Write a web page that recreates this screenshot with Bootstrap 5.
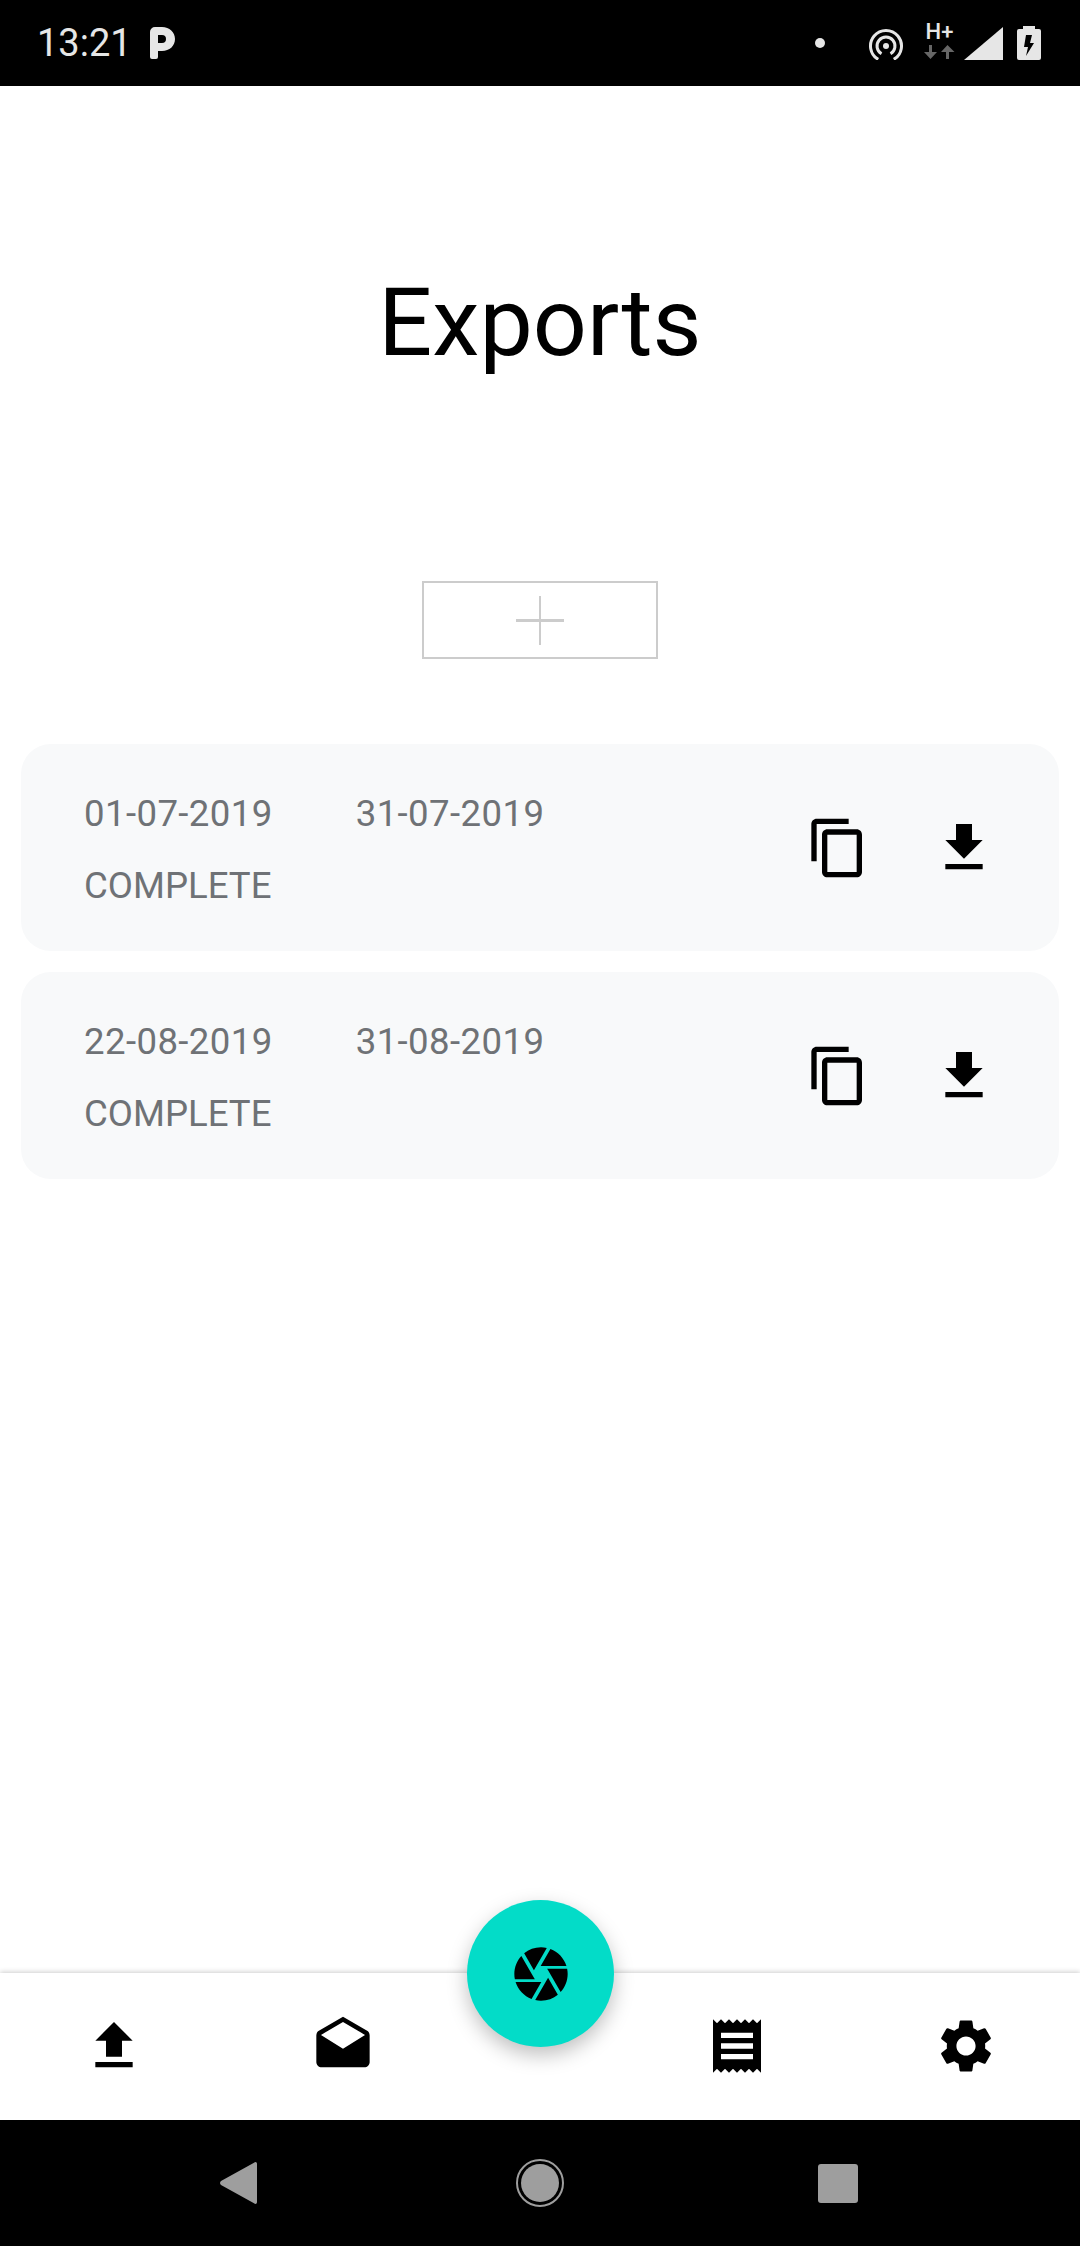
<!DOCTYPE html>
<html lang="en">

<head>
    <meta charset="UTF-8">
    <meta name="viewport" content="width=device-width, initial-scale=1.0">
    <title>Exports</title>
    <link href="https://cdn.jsdelivr.net/npm/bootstrap@5.3.0/dist/css/bootstrap.min.css" rel="stylesheet">
    <style>
        body {
            font-family: Roboto, "Liberation Sans", sans-serif;
            background-color: #fff;
        }

        .app-screen {
            height: 2246px;
        }

        /* android status bar */
        .status-strip {
            height: 86px;
            padding: 0 39px 0 37px;
            background-color: #000;
            color: #e6e6e6;
        }

        .status-time {
            font-size: 38px;
            line-height: 1;
        }

        .status-p { margin-left: 18px; }
        .status-dot {
            width: 10px;
            height: 10px;
            border-radius: 50%;
            background-color: #e6e6e6;
        }
        .status-hotspot { margin-left: 43px; }
        .status-net {
            width: 33px;
            margin-left: 19px;
            margin-bottom: 3px;
        }
        .status-net-type {
            font-size: 22px;
            font-weight: 500;
            line-height: 16px;
            margin-bottom: 5px;
        }
        .status-signal { margin-left: 8px; }
        .status-battery { margin-left: 14px; }

        /* page content */
        .page-title {
            margin: 0;
            padding-top: 180px;
            font-size: 95px;
            line-height: 114px;
            font-weight: 400;
            color: #000;
        }

        .add-export {
            width: 236px;
            height: 78px;
            margin-top: 201px;
            border: 2px solid #ccc;
            border-radius: 0;
        }

        .export-list {
            margin-top: 85px;
            padding: 0 21px;
            gap: 21px;
        }

        .export-item {
            padding: 34px 63px 29px 63px;
            border-radius: 30px;
            background-color: #f8f9fa;
        }

        .export-text {
            font-size: 36.6px;
            line-height: 72px;
            color: #6f7276;
        }

        .export-dates { gap: 83px; }
        .export-dates span { letter-spacing: .4px; }
        .export-actions {
            gap: 62px;
            margin-bottom: 5px;
        }
        .ico-64 {
            width: 64px;
            height: 64px;
        }

        /* bottom tabs */
        .tab-bar {
            height: 147px;
            padding-bottom: 2px;
            display: grid;
            grid-template-columns: 228px 229px 1fr 228px 229px;
            align-items: center;
            justify-items: center;
            background-color: #fff;
            box-shadow: 0 -1px 5px rgba(0, 0, 0, .2);
        }

        .shutter-fab {
            top: -73px;
            left: 467px;
            width: 147px;
            height: 147px;
            background-color: #03dcc8;
            box-shadow: 0 8px 20px rgba(0, 0, 0, .25);
        }

        /* android keys */
        .system-keys {
            height: 126px;
            padding-left: 220px;
            background-color: #000;
        }

        .key-home { margin-left: 259px; }
        .key-recent {
            width: 40px;
            height: 39px;
            margin-left: 254px;
            border-radius: 3px;
            background-color: #9e9e9e;
        }
    </style>
</head>

<body>
    <div class="app-screen d-flex flex-column">

        <div class="status-strip d-flex align-items-center">
            <span class="status-time">13:21</span>
            <svg class="status-p" width="25" height="32" viewBox="0 0 25 32">
                <path fill="#e6e6e6" fill-rule="evenodd" d="M5 0h7c7.500 0 13 5 13 12s-5.500 12-13 12H8v6a2 2 0 0 1-2 2H2a2 2 0 0 1-2-2V5a5 5 0 0 1 5-5zM8 8v8h4a4 4 0 0 0 0-8z" />
            </svg>
            <span class="status-dot ms-auto"></span>
            <svg class="status-hotspot" width="36" height="34" viewBox="0 0 36 34" fill="none" stroke="#e6e6e6" stroke-width="3">
                <path d="M10.250 33.400A15.500 15.500 0 1 1 25.750 33.400" />
                <path d="M13.500 27.800A9 9 0 1 1 22.500 27.800" />
                <circle cx="18" cy="20" r="3" fill="#e6e6e6" stroke="none" />
            </svg>
            <div class="status-net d-flex flex-column align-items-center">
                <span class="status-net-type">H+</span>
                <svg width="33" height="14" viewBox="0 0 33 14">
                    <path fill="#666" d="M6 0h3v7h5l-6.500 7L1 7h5zM26 14h-3V7h-5l6.500-7 7 7h-5.500z" />
                </svg>
            </div>
            <svg class="status-signal" width="39" height="33" viewBox="0 0 39 33">
                <path fill="#e6e6e6" d="M0 33 39 0v33z" />
            </svg>
            <svg class="status-battery" width="24" height="34" viewBox="0 0 24 34">
                <path fill="#e6e6e6" d="M6 0h12v3h4a2 2 0 0 1 2 2v27a2 2 0 0 1-2 2H2a2 2 0 0 1-2-2V5a2 2 0 0 1 2-2h4z" />
                <path fill="#000" d="M15 9H9l-2 12h4l-2 9 8-13h-4z" />
            </svg>
        </div>

        <main class="flex-grow-1 d-flex flex-column text-center">
            <h1 class="page-title">Exports</h1>

            <div>
                <button type="button" class="btn add-export p-0 d-inline-flex align-items-center justify-content-center">
                    <svg width="48" height="49" viewBox="0 0 48 49">
                        <path fill="#ccc" d="M23 0h2v23h23v3H25v23h-2V26H0v-3h23z" />
                    </svg>
                </button>
            </div>

            <div class="export-list d-flex flex-column text-start">
                <div class="export-item d-flex align-items-center justify-content-between">
                    <div class="export-text">
                        <div class="export-dates d-flex">
                            <span>01-07-2019</span>
                            <span>31-07-2019</span>
                        </div>
                        <div>COMPLETE</div>
                    </div>
                    <div class="export-actions d-flex">
                        <svg class="ico-64" viewBox="0 0 24 24"><path d="M16 1H4c-1.100 0-2 .9-2 2v14h2V3h12V1zm3 4H8c-1.100 0-2 .9-2 2v14c0 1.100.9 2 2 2h11c1.100 0 2-.9 2-2V7c0-1.100-.9-2-2-2zm0 16H8V7h11v14z" /></svg>
                        <svg class="ico-64" viewBox="0 0 24 24"><path d="M19 9h-4V3H9v6H5l7 7 7-7zM5 18v2h14v-2H5z" /></svg>
                    </div>
                </div>

                <div class="export-item d-flex align-items-center justify-content-between">
                    <div class="export-text">
                        <div class="export-dates d-flex">
                            <span>22-08-2019</span>
                            <span>31-08-2019</span>
                        </div>
                        <div>COMPLETE</div>
                    </div>
                    <div class="export-actions d-flex">
                        <svg class="ico-64" viewBox="0 0 24 24"><path d="M16 1H4c-1.100 0-2 .9-2 2v14h2V3h12V1zm3 4H8c-1.100 0-2 .9-2 2v14c0 1.100.9 2 2 2h11c1.100 0 2-.9 2-2V7c0-1.100-.9-2-2-2zm0 16H8V7h11v14z" /></svg>
                        <svg class="ico-64" viewBox="0 0 24 24"><path d="M19 9h-4V3H9v6H5l7 7 7-7zM5 18v2h14v-2H5z" /></svg>
                    </div>
                </div>
            </div>
        </main>

        <nav class="tab-bar position-relative">
            <svg class="ico-64" viewBox="0 0 24 24"><path d="M9 16h6v-6h4l-7-7-7 7h4v6zm-4 2h14v2H5v-2z" /></svg>
            <svg class="ico-64" viewBox="0 0 24 24"><path d="M21.990 8c0-.72-.37-1.350-.94-1.700L12 1 2.950 6.300C2.380 6.650 2 7.280 2 8v10c0 1.100.9 2 2 2h16c1.100 0 2-.9 2-2l-.01-10zM12 13 3.740 7.840 12 3l8.260 4.840L12 13z" /></svg>
            <span></span>
            <svg class="ico-64" viewBox="0 0 24 24"><path d="M18 17H6v-2h12v2zm0-4H6v-2h12v2zm0-4H6V7h12v2zM3 22l1.500-1.500L6 22l1.500-1.500L9 22l1.500-1.500L12 22l1.500-1.500L15 22l1.500-1.500L18 22l1.500-1.500L21 22V2l-1.500 1.500L18 2l-1.500 1.500L15 2l-1.500 1.500L12 2l-1.500 1.500L9 2 7.500 3.500 6 2 4.500 3.500 3 2v20z" /></svg>
            <svg class="ico-64" viewBox="0 0 24 24"><path d="M19.140 12.940c.04-.3.06-.61.06-.94 0-.32-.02-.64-.07-.94l2.030-1.580c.18-.14.23-.41.12-.61l-1.920-3.320c-.12-.22-.37-.29-.59-.22l-2.390.96c-.5-.38-1.030-.7-1.620-.94l-.36-2.540c-.04-.24-.24-.41-.48-.41h-3.840c-.24 0-.43.17-.47.41l-.36 2.540c-.59.24-1.130.57-1.620.94l-2.390-.96c-.22-.08-.47 0-.59.22L2.740 8.870c-.12.21-.08.47.12.61l2.030 1.580c-.05.3-.09.63-.09.94s.02.64.07.94l-2.030 1.580c-.18.14-.23.41-.12.61l1.920 3.320c.12.22.37.29.59.22l2.390-.96c.5.38 1.030.7 1.620.94l.36 2.540c.05.24.24.41.48.41h3.840c.24 0 .44-.17.47-.41l.36-2.540c.59-.24 1.130-.56 1.620-.94l2.390.96c.22.08.47 0 .59-.22l1.920-3.320c.12-.22.07-.47-.12-.61l-2.010-1.580zM12 15.600c-1.980 0-3.600-1.620-3.600-3.600s1.620-3.600 3.600-3.600 3.600 1.620 3.600 3.600-1.620 3.600-3.600 3.600z" /></svg>

            <button type="button" class="btn shutter-fab position-absolute rounded-circle border-0 p-0 d-flex align-items-center justify-content-center">
                <svg class="ico-64" viewBox="0 0 24 24"><path d="M9.400 10.500l4.770-8.260C13.470 2.090 12.750 2 12 2c-2.400 0-4.600.85-6.320 2.250l3.660 6.350.06-.1zM21.540 9c-.92-2.920-3.150-5.260-6-6.340L11.880 9h9.660zm.26 1h-7.490l.29.5 4.760 8.250C21 16.970 22 14.610 22 12c0-.69-.07-1.350-.2-2zM8.540 12l-3.900-6.750C3.010 7.030 2 9.390 2 12c0 .69.07 1.350.2 2h7.490l-1.150-2zm-6.080 3c.92 2.920 3.150 5.260 6 6.340L12.120 15H2.460zm11.270 0l-3.900 6.760c.7.15 1.420.24 2.170.24 2.400 0 4.600-.85 6.320-2.250l-3.660-6.350-.93 1.600z" /></svg>
            </button>
        </nav>

        <div class="system-keys d-flex align-items-center">
            <svg width="37" height="42" viewBox="0 0 37 42">
                <path fill="#9e9e9e" d="M34 .7c1.500-1.200 3-.5 3 1.300v38c0 1.800-1.500 2.500-3 1.300L1 23c-1.300-1-1.300-3 0-4z" />
            </svg>
            <svg class="key-home" width="48" height="48" viewBox="0 0 48 48">
                <circle cx="24" cy="24" r="23" fill="none" stroke="#9e9e9e" stroke-width="2" />
                <circle cx="24" cy="24" r="19" fill="#9e9e9e" />
            </svg>
            <span class="key-recent"></span>
        </div>

    </div>

    <script src="https://cdn.jsdelivr.net/npm/bootstrap@5.3.0/dist/js/bootstrap.bundle.min.js"></script>
</body>

</html>
